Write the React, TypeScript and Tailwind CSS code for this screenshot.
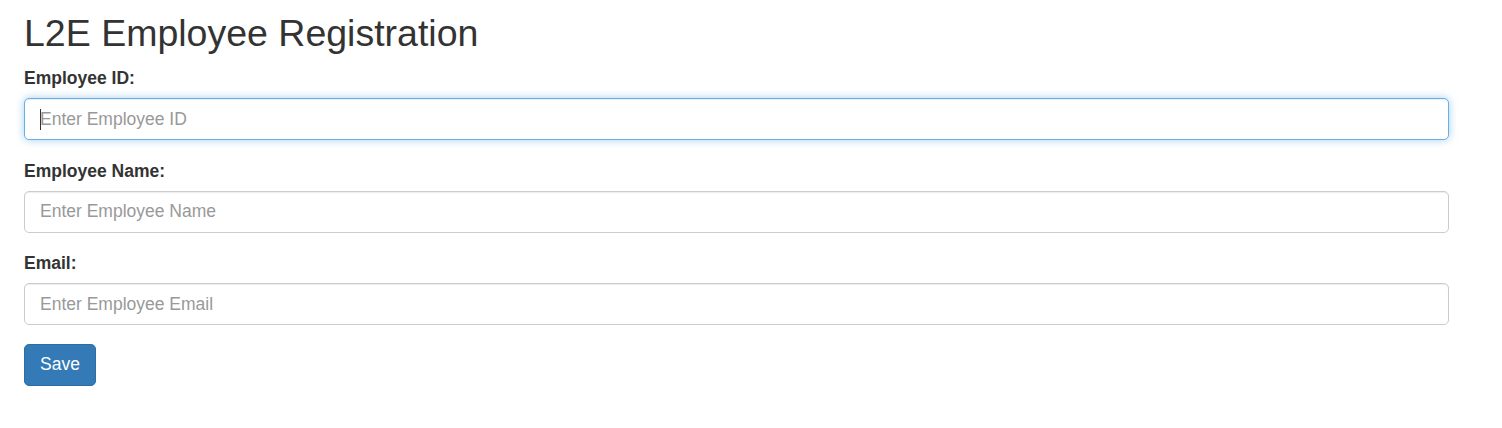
export default function App() {
  const font = { fontFamily: '"Liberation Sans", Arial, sans-serif' };
  const inputCls =
    "block w-[1425px] h-[42px] px-[15px] rounded-[5px] border bg-white text-[17.5px] text-[#555] placeholder:text-[#999] outline-none";

  return (
    <div className="min-h-screen bg-white px-[24px] pt-[13px] text-[#333]" style={font}>
      {/* Page title */}
      <h2 className="text-[37.5px] leading-[41.25px] font-normal mb-[11.75px]">L2E Employee Registration</h2>

      <form onSubmit={(e) => e.preventDefault()}>
        <div className="mb-[18.5px]">
          <label className="block text-[17.5px] leading-[25px] font-bold mb-[7px]">Employee ID:</label>
          <div className="relative">
            <input
              className={inputCls + " border-[#66afe9] shadow-[inset_0_1px_1px_rgba(0,0,0,0.075),0_0_8px_rgba(102,175,233,0.6)]"}
              placeholder="Enter Employee ID"
            />
            {/* caret */}
            <span className="absolute left-[16px] top-[11px] w-px h-[21px] bg-[#333]" />
          </div>
        </div>

        <div className="mb-[18.5px]">
          <label className="block text-[17.5px] leading-[25px] font-bold mb-[7px]">Employee Name:</label>
          <input
            className={inputCls + " border-[#ccc] shadow-[inset_0_1px_1px_rgba(0,0,0,0.075)]"}
            placeholder="Enter Employee Name"
          />
        </div>

        <div className="mb-[18.5px]">
          <label className="block text-[17.5px] leading-[25px] font-bold mb-[7px]">Email:</label>
          <input
            className={inputCls + " border-[#ccc] shadow-[inset_0_1px_1px_rgba(0,0,0,0.075)]"}
            placeholder="Enter Employee Email"
          />
        </div>

        <button
          type="submit"
          className="h-[42px] px-[15px] rounded-[5px] border border-[#2e6da4] bg-[#337ab7] text-white text-[17.5px] leading-[25px]"
        >
          Save
        </button>
      </form>
    </div>
  );
}
